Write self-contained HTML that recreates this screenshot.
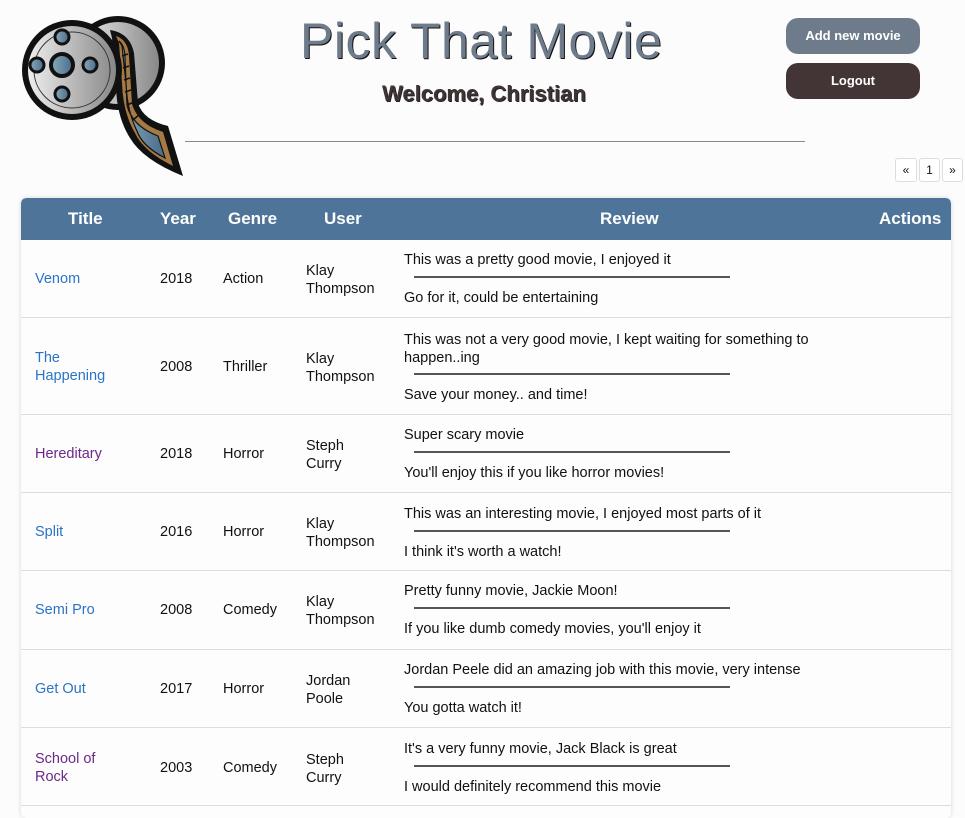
<!DOCTYPE html>
<html><head><meta charset="utf-8"><style>
*{margin:0;padding:0;box-sizing:border-box}
body{width:965px;height:807px;background:#fcfcfc;font-family:"Liberation Sans",sans-serif;color:#111;position:relative;overflow:hidden}
.abs{position:absolute}
h1{position:absolute;left:300px;top:12px;font-size:50px;font-weight:normal;color:#6e7b8b;text-shadow:1px 1px 0 #111;letter-spacing:0.5px}
h2{position:absolute;left:382px;top:81px;font-size:22px;color:#3f3434;font-weight:bold;text-shadow:1px 1px 0 #222}
.btn{position:absolute;left:786px;width:134px;height:36px;border-radius:12px;color:#fff;font-weight:bold;font-size:13px;text-align:center;line-height:36px}
.pg{position:absolute;top:158px;height:24px;border:1px solid #ddd;background:#fff;font-size:12px;text-align:center;line-height:22px;border-radius:3px}
.tbl{position:absolute;left:21px;top:198px;width:930px;height:620px;background:#fdfdfd;border-radius:5px;box-shadow:0 0 5px rgba(0,0,0,.15);overflow:hidden}
.th{position:absolute;top:0;left:0;width:930px;height:42px;background:#4e7599;border-radius:5px 5px 0 0;color:#fff;font-weight:bold;font-size:17px}
.th span{position:absolute;top:11px}
.row{position:absolute;left:0;width:930px;border-bottom:1px solid #ddd;font-size:14.5px}
.row div{position:absolute;margin-top:2px}
.t{left:14px;color:#2a73c8}
.v{color:#6b2a8a}
.row .hr{height:2px;background:#555;left:393px;width:316px;margin-top:0}
</style></head><body>
<svg class="abs" style="left:18px;top:8px" width="170" height="170" viewBox="0 0 170 170">
<defs><linearGradient id="g" x1="0" x2="1"><stop offset="0" stop-color="#eee"/><stop offset="1" stop-color="#888"/></linearGradient>
<linearGradient id="b" x1="0" x2="1"><stop offset="0" stop-color="#8ab"/><stop offset="1" stop-color="#4a6b8a"/></linearGradient></defs>
<circle cx="100" cy="55" r="47" fill="#111"/><circle cx="100" cy="55" r="41" fill="url(#g)"/>
<path d="M92 22 Q112 25 116 45 L120 95 Q125 112 150 118 L165 168 Q125 152 112 130 Q98 108 98 75 L94 30 Z" fill="#111"/>
<path d="M98 28 Q110 32 111 48 L114 96 Q120 116 145 124 L155 158 Q125 143 117 125 Q105 105 104 75 L101 35 Z" fill="#a67a44"/>
<path d="M101 33 Q107 38 107 50 L109 97 Q114 118 140 128 L147 150 Q124 138 119 123 Q109 103 108 75 L104 38 Z" fill="url(#b)" stroke="#111" stroke-width="1.2"/>
<g stroke="#111" stroke-width="1.5"><line x1="104" y1="48" x2="110" y2="46"/><line x1="105" y1="60" x2="111" y2="58"/><line x1="106" y1="72" x2="112" y2="70"/><line x1="107" y1="84" x2="113" y2="82"/><line x1="109" y1="97" x2="116" y2="94"/><line x1="115" y1="112" x2="122" y2="106"/></g>
<circle cx="54" cy="62" r="50" fill="#111"/>
<circle cx="54" cy="62" r="44" fill="url(#g)"/>
<circle cx="54" cy="62" r="38" fill="none" stroke="#333" stroke-width="1"/>
<circle cx="44" cy="57" r="11" fill="url(#b)" stroke="#111" stroke-width="4"/>
<circle cx="44" cy="29" r="7" fill="url(#b)" stroke="#111" stroke-width="3"/>
<circle cx="44" cy="86" r="7" fill="url(#b)" stroke="#111" stroke-width="3"/>
<circle cx="19" cy="57" r="7" fill="url(#b)" stroke="#111" stroke-width="3"/>
<circle cx="72" cy="57" r="7" fill="url(#b)" stroke="#111" stroke-width="3"/>
</svg>
<div class="abs" style="left:185px;top:141px;width:620px;height:1px;background:#888"></div>
<h1>Pick That Movie</h1>
<h2>Welcome, Christian</h2>
<div class="btn" style="top:18px;background:#6e7b8b">Add new movie</div>
<div class="btn" style="top:63px;background:#433535">Logout</div>
<div class="pg" style="left:895px;width:22px">«</div>
<div class="pg" style="left:919px;width:21px">1</div>
<div class="pg" style="left:942px;width:21px">»</div>
<div class="tbl">
<div class="th"><span style="left:47px">Title</span><span style="left:139px">Year</span><span style="left:207px">Genre</span><span style="left:303px">User</span><span style="left:579px">Review</span><span style="left:858px">Actions</span></div>

<div class="row" style="top:42px;height:78px"><div class="t" style="top:29px">Venom</div><div style="left:139px;top:29px">2018</div><div style="left:202px;top:29px">Action</div><div style="left:285px;top:20px;line-height:18px">Klay<br>Thompson</div><div style="left:383px;top:10px">This was a pretty good movie, I enjoyed it</div><div class="hr" style="top:36px"></div><div style="left:383px;top:48px">Go for it, could be entertaining</div></div>

<div class="row" style="top:120px;height:97px"><div class="t" style="top:29px;line-height:18px">The<br>Happening</div><div style="left:139px;top:39px">2008</div><div style="left:202px;top:39px">Thriller</div><div style="left:285px;top:30px;line-height:18px">Klay<br>Thompson</div><div style="left:383px;top:11px;line-height:18px">This was not a very good movie, I kept waiting for something to<br>happen..ing</div><div class="hr" style="top:55px"></div><div style="left:383px;top:67px">Save your money.. and time!</div></div>

<div class="row" style="top:217px;height:78px"><div class="t v" style="top:29px">Hereditary</div><div style="left:139px;top:29px">2018</div><div style="left:202px;top:29px">Horror</div><div style="left:285px;top:20px;line-height:18px">Steph<br>Curry</div><div style="left:383px;top:10px">Super scary movie</div><div class="hr" style="top:36px"></div><div style="left:383px;top:48px">You'll enjoy this if you like horror movies!</div></div>

<div class="row" style="top:295px;height:78px"><div class="t" style="top:29px">Split</div><div style="left:139px;top:29px">2016</div><div style="left:202px;top:29px">Horror</div><div style="left:285px;top:20px;line-height:18px">Klay<br>Thompson</div><div style="left:383px;top:11px">This was an interesting movie, I enjoyed most parts of it</div><div class="hr" style="top:37px"></div><div style="left:383px;top:49px">I think it's worth a watch!</div></div>

<div class="row" style="top:373px;height:79px"><div class="t" style="top:29px">Semi Pro</div><div style="left:139px;top:29px">2008</div><div style="left:202px;top:29px">Comedy</div><div style="left:285px;top:20px;line-height:18px">Klay<br>Thompson</div><div style="left:383px;top:10px">Pretty funny movie, Jackie Moon!</div><div class="hr" style="top:36px"></div><div style="left:383px;top:48px">If you like dumb comedy movies, you'll enjoy it</div></div>

<div class="row" style="top:452px;height:78px"><div class="t" style="top:29px">Get Out</div><div style="left:139px;top:29px">2017</div><div style="left:202px;top:29px">Horror</div><div style="left:285px;top:20px;line-height:18px">Jordan<br>Poole</div><div style="left:383px;top:10px">Jordan Peele did an amazing job with this movie, very intense</div><div class="hr" style="top:36px"></div><div style="left:383px;top:48px">You gotta watch it!</div></div>

<div class="row" style="top:530px;height:78px"><div class="t v" style="top:20px;line-height:18px">School of<br>Rock</div><div style="left:139px;top:30px">2003</div><div style="left:202px;top:30px">Comedy</div><div style="left:285px;top:21px;line-height:18px">Steph<br>Curry</div><div style="left:383px;top:11px">It's a very funny movie, Jack Black is great</div><div class="hr" style="top:37px"></div><div style="left:383px;top:49px">I would definitely recommend this movie</div></div>
</div>
</body></html>
